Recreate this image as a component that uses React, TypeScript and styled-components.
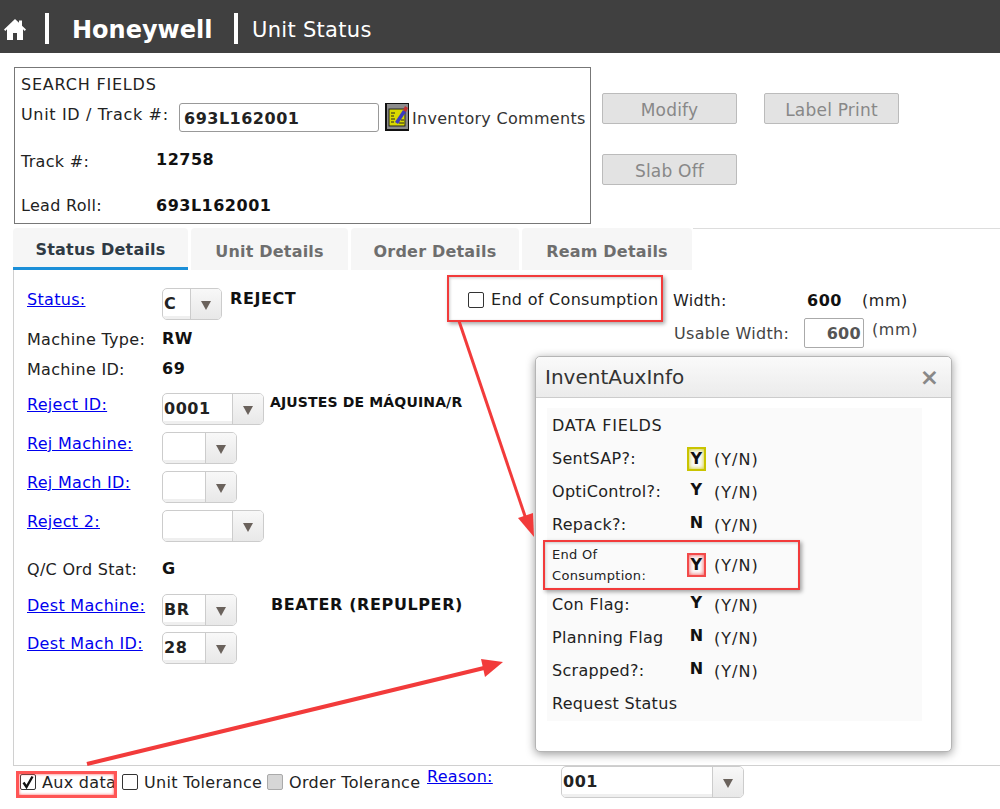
import React from 'react'
import styled, { createGlobalStyle } from 'styled-components'

const GlobalStyle = createGlobalStyle`
  html, body {
    margin: 0;
    height: 809px;
    overflow: hidden;
    background: #fff;
    font-family: 'DejaVu Sans', Verdana, sans-serif;
    font-size: 16px;
    letter-spacing: 0.3px;
    color: #222;
  }
  * { box-sizing: border-box; }
`

const Page = styled.div`
  position: relative;
  width: 1000px;
  height: 809px;
  overflow: hidden;
`

const Header = styled.header`
  display: flex;
  align-items: center;
  height: 53px;
  background: #404040;
  color: #fff;
  padding: 3px 0 0 4px;
`

const HomeLink = styled.a`
  display: flex;
  width: 41px;
  margin-top: 3px;
`

const Divider = styled.span`
  width: 4px;
  height: 31px;
  background: #fff;
`

const Brand = styled.span`
  width: 185px;
  padding: 3px 0 0 23px;
  font-size: 24px;
  letter-spacing: 0;
  font-weight: 700;
  white-space: nowrap;
`

const PageTitle = styled.span`
  padding: 3px 0 0 14px;
  font-size: 21px;
  white-space: nowrap;
`

const TopArea = styled.section`
  display: flex;
  height: 175px;
  padding: 14px 0 0 14px;
`

const SearchBox = styled.div`
  width: 577px;
  height: 157px;
  border: 1px solid #777;
  padding: 7px 0 0 6px;
`

const SearchTitle = styled.div`
  height: 23px;
  line-height: 20px;
  letter-spacing: 0.8px;
`

const SearchRow = styled.div<{ $h: number }>`
  display: flex;
  align-items: center;
  height: ${(p) => p.$h}px;
  white-space: nowrap;
`

const SearchLabel = styled.span<{ $shift?: number; $wide?: boolean }>`
  flex: none;
  width: 135px;
  margin-top: ${(p) => p.$shift ?? 0}px;
  letter-spacing: ${(p) => (p.$wide ? 0.65 : 0.3)}px;
`

const UnitInput = styled.div`
  width: 200px;
  height: 29px;
  margin: 0 6px 0 23px;
  padding-left: 4px;
  border: 1px solid #999;
  border-radius: 3px;
  font-weight: 700;
  letter-spacing: 0.5px;
  line-height: 29px;
`

const CommentLabel = styled.span`
  padding: 3px 0 0 3px;
  color: #333;
`

const Strong = styled.span<{ $drop?: boolean }>`
  font-weight: 700;
  letter-spacing: 0.5px;
  color: #111;
  padding-top: ${(p) => (p.$drop ? 2 : 0)}px;
`

const Actions = styled.div`
  display: grid;
  grid-template-columns: 135px 135px;
  grid-auto-rows: 31px;
  column-gap: 27px;
  row-gap: 30px;
  margin: 26px 0 0 11px;
`

const ActionButton = styled.button`
  padding-top: 3px;
  border: 1px solid #bbb;
  border-radius: 2px;
  background: #e3e3e3;
  color: #888;
  font: inherit;
  font-size: 17px;
  letter-spacing: 0.2px;
`

const Tabs = styled.nav`
  display: flex;
  gap: 3px;
  height: 42px;
  margin-left: 13px;
  position: relative;
  &::after {
    content: '';
    position: absolute;
    left: 680px;
    right: 0;
    top: 0;
    border-top: 1px solid #ddd;
  }
`

const Tab = styled.div<{ $w: number; $active?: boolean }>`
  width: ${(p) => p.$w}px;
  padding-top: ${(p) => (p.$active ? 12 : 14)}px;
  text-align: center;
  font-weight: 700;
  font-size: 16px;
  letter-spacing: 0.2px;
  border-radius: 4px 4px 0 0;
  background: #f6f6f6;
  color: ${(p) => (p.$active ? '#2f3a44' : '#6e6e6e')};
  border-bottom: ${(p) => (p.$active ? '3px solid #1b8fd8' : 'none')};
`

const Panel = styled.section`
  display: flex;
  height: 496px;
  margin-left: 13px;
  border-left: 1px solid #d0d0d0;
  border-bottom: 1px solid #d0d0d0;
`

const FormColumn = styled.div`
  width: 434px;
  padding: 18px 0 0 13px;
`

const FormRow = styled.div<{ $h: number }>`
  display: flex;
  height: ${(p) => p.$h}px;
  white-space: nowrap;
`

const FieldLabel = styled.span`
  flex: none;
  width: 135px;
  padding-top: 3px;
  color: #222;
`

const FieldLink = styled.a`
  flex: none;
  width: 135px;
  height: 24px;
  padding-top: 2px;
  color: #0000ee;
  text-decoration: underline;
`

const Select = styled.div<{ $w: number }>`
  display: flex;
  flex: none;
  width: ${(p) => p.$w}px;
  height: 32px;
  border: 1px solid #ccc;
  border-radius: 5px;
  overflow: hidden;
  font-weight: 700;
`

const SelectValue = styled.div`
  flex: 1;
  padding-left: 1px;
  line-height: 30px;
  letter-spacing: 0.5px;
  box-shadow: inset 0 -3px 0 #efefef;
`

const SelectArrow = styled.div`
  display: flex;
  align-items: center;
  justify-content: center;
  width: 31px;
  border-left: 1px solid #ccc;
  background: linear-gradient(#f8f8f8, #e8e8e8);
  &::after {
    content: '';
    margin-top: 3px;
    border-left: 5px solid transparent;
    border-right: 5px solid transparent;
    border-top: 9px solid #6a625c;
  }
`

const SelectNote = styled.span<{ $small?: boolean; $indent?: number }>`
  padding: 1px 0 0 ${(p) => p.$indent ?? 8}px;
  font-weight: 700;
  font-size: ${(p) => (p.$small ? 14 : 16)}px;
  letter-spacing: ${(p) => (p.$small ? 0.15 : 0.6)}px;
  color: #111;
`

const SideColumn = styled.div`
  padding: 19px 0 0 20px;
`

const SideTop = styled.div`
  display: flex;
  align-items: center;
  height: 22px;
  white-space: nowrap;
`

const CheckBox = styled.span<{ $disabled?: boolean }>`
  display: inline-flex;
  align-items: center;
  justify-content: center;
  flex: none;
  width: 16px;
  height: 16px;
  border: 1px solid ${(p) => (p.$disabled ? '#aaa' : '#333')};
  border-radius: 2px;
  background: ${(p) => (p.$disabled ? '#d6d6d6' : '#fff')};
`

const ConsumptionLabel = styled.span`
  width: 189px;
  padding: 0 0 2px 7px;
`

const WidthLabel = styled.span`
  width: 134px;
`

const WidthUnit = styled.span`
  padding-left: 20px;
  letter-spacing: 0.6px;
`

const SideBottom = styled.div`
  display: flex;
  margin: 7px 0 0 206px;
  white-space: nowrap;
  color: #444;
  height: 30px;
`

const UsableLabel = styled.span`
  width: 130px;
  padding-top: 6px;
`

const UsableBox = styled.div`
  width: 60px;
  height: 30px;
  margin-right: 8px;
  padding-right: 2px;
  border: 1px solid #aaa;
  border-radius: 2px;
  text-align: right;
  font-weight: 700;
  line-height: 30px;
  color: #555;
`

const UsableUnit = styled.span`
  padding-top: 2px;
  letter-spacing: 0.6px;
`

const Footer = styled.footer`
  display: flex;
  align-items: flex-start;
  padding-left: 20px;
  white-space: nowrap;
`

const FooterCheck = styled.label<{ $w: number }>`
  display: flex;
  align-items: center;
  gap: 6px;
  width: ${(p) => p.$w}px;
  height: 32px;
`

const ReasonLink = styled.a`
  width: 134px;
  padding-top: 1px;
  color: #0000ee;
  text-decoration: underline;
`

const Dialog = styled.aside`
  position: absolute;
  left: 535px;
  top: 356px;
  width: 417px;
  height: 396px;
  background: #fff;
  border: 1px solid #b5b5b5;
  border-radius: 5px;
  box-shadow: 0 2px 10px rgba(0, 0, 0, 0.4);
`

const DialogTitle = styled.div`
  display: flex;
  align-items: center;
  justify-content: space-between;
  height: 41px;
  padding: 0 12px 0 9px;
  border-bottom: 1px solid #ccc;
  border-radius: 5px 5px 0 0;
  background: linear-gradient(#fafafa, #ebebeb);
  font-size: 20px;
  letter-spacing: 0;
  color: #333;
`

const CloseMark = styled.span`
  font-size: 23px;
  font-weight: 700;
  color: #888;
  line-height: 1;
`

const DialogBody = styled.div`
  width: 375px;
  height: 313px;
  margin: 10px 0 0 11px;
  padding: 6px 0 0 5px;
  background: #fafafa;
`

const AuxHeading = styled.div`
  height: 28px;
  padding-top: 1px;
  line-height: 22px;
  letter-spacing: 0.8px;
`

const AuxRow = styled.div<{ $h: number }>`
  display: flex;
  align-items: center;
  height: ${(p) => p.$h}px;
  white-space: nowrap;
`

const AuxLabel = styled.span<{ $small?: boolean }>`
  flex: none;
  width: 135px;
  font-size: ${(p) => (p.$small ? 13 : 16)}px;
  line-height: 21px;
  white-space: ${(p) => (p.$small ? 'normal' : 'nowrap')};
`

const AuxValue = styled.span<{ $glow?: 'yellow' | 'red' }>`
  display: inline-block;
  width: 19px;
  height: 24px;
  margin-right: 8px;
  font-weight: 700;
  line-height: 20px;
  text-align: center;
  color: #111;
  ${(p) =>
    p.$glow === 'yellow' &&
    'border: 2px solid #c9c400; box-shadow: inset 0 0 4px #c9c400;'}
  ${(p) =>
    p.$glow === 'red' &&
    'border: 2px solid #f24a4a; box-shadow: inset 0 0 4px #f24a4a;'}
`

const AuxHint = styled.span`
  padding-top: 2px;
  letter-spacing: 1px;
`

const RedBox = styled.div<{ $l: number; $t: number; $w: number; $h: number }>`
  position: absolute;
  left: ${(p) => p.$l}px;
  top: ${(p) => p.$t}px;
  width: ${(p) => p.$w}px;
  height: ${(p) => p.$h}px;
  border: 2px solid #f23b3b;
  box-shadow: 2px 2px 4px rgba(0, 0, 0, 0.35), inset 1px 1px 3px rgba(0, 0, 0, 0.2);
`

const AuxMark = styled.div`
  position: absolute;
  left: 16px;
  top: 771px;
  width: 101px;
  height: 27px;
  border: 3px solid #f55;
  box-shadow: inset 0 0 3px #f55;
`

const ArrowLayer = styled.svg`
  position: absolute;
  left: 0;
  top: 0;
  pointer-events: none;
`

const HomeIcon = () => (
  <svg width="22" height="21" viewBox="0 0 22 21" fill="#fff">
    <path d="M11 0 0 10.5l1.3 1.4L3 10.3V21h6v-7h4v7h6V10.3l1.7 1.6 1.3-1.4-4-3.8V1.5h-3v2.3z" />
  </svg>
)

const CommentIcon = () => (
  <svg width="24" height="28" viewBox="0 0 24 28" style={{ flex: 'none' }}>
    <rect width="24" height="28" fill="#111" />
    <rect x="2" y="1" width="21" height="25" fill="#8c8c8c" />
    <rect x="4" y="6" width="16" height="17" fill="#d8d800" stroke="#222" />
    <path d="M6 10h4M6 13h3M6 16h4M6 19h3M14 20h5M16 17h3" stroke="#222" />
    <path d="M10 19 18 7l3 2-8 12z" fill="#3a3ac0" />
    <path d="M18 7l2-4 3 2-2 4z" fill="#c03030" />
  </svg>
)

const CheckMark = () => (
  <svg width="14" height="14" viewBox="0 0 14 14">
    <path d="M2.5 7.5 5.5 12 11.5 1.5" fill="none" stroke="#111" strokeWidth="2.4" />
  </svg>
)

const fields = [
  { label: 'SentSAP?:', value: 'Y', h: 33, glow: 'yellow' as const },
  { label: 'OptiControl?:', value: 'Y', h: 33 },
  { label: 'Repack?:', value: 'N', h: 33 },
  { label: 'End Of Consumption:', value: 'Y', h: 47, glow: 'red' as const, small: true },
  { label: 'Con Flag:', value: 'Y', h: 33 },
  { label: 'Planning Flag', value: 'N', h: 33 },
  { label: 'Scrapped?:', value: 'N', h: 33 },
]

const App = () => (
  <Page>
    <GlobalStyle />
    <Header>
      <HomeLink>
        <HomeIcon />
      </HomeLink>
      <Divider />
      <Brand>Honeywell</Brand>
      <Divider />
      <PageTitle>Unit Status</PageTitle>
    </Header>

    <TopArea>
      <SearchBox>
        <SearchTitle>SEARCH FIELDS</SearchTitle>
        <SearchRow $h={38}>
          <SearchLabel $shift={-6} $wide>Unit ID / Track #:</SearchLabel>
          <UnitInput>693L162001</UnitInput>
          <CommentIcon />
          <CommentLabel>Inventory Comments</CommentLabel>
        </SearchRow>
        <SearchRow $h={47}>
          <SearchLabel $shift={4}>Track #:</SearchLabel>
          <Strong>12758</Strong>
        </SearchRow>
        <SearchRow $h={45}>
          <SearchLabel>Lead Roll:</SearchLabel>
          <Strong>693L162001</Strong>
        </SearchRow>
      </SearchBox>
      <Actions>
        <ActionButton>Modify</ActionButton>
        <ActionButton>Label Print</ActionButton>
        <ActionButton>Slab Off</ActionButton>
      </Actions>
    </TopArea>

    <Tabs>
      <Tab $w={175} $active>Status Details</Tab>
      <Tab $w={157}>Unit Details</Tab>
      <Tab $w={168}>Order Details</Tab>
      <Tab $w={170}>Ream Details</Tab>
    </Tabs>

    <Panel>
      <FormColumn>
        <FormRow $h={39}>
          <FieldLink>Status:</FieldLink>
          <Select $w={60}>
            <SelectValue>C</SelectValue>
            <SelectArrow />
          </Select>
          <SelectNote>REJECT</SelectNote>
        </FormRow>
        <FormRow $h={30}>
          <FieldLabel>Machine Type:</FieldLabel>
          <Strong $drop>RW</Strong>
        </FormRow>
        <FormRow $h={36}>
          <FieldLabel>Machine ID:</FieldLabel>
          <Strong $drop>69</Strong>
        </FormRow>
        <FormRow $h={39}>
          <FieldLink>Reject ID:</FieldLink>
          <Select $w={102}>
            <SelectValue>0001</SelectValue>
            <SelectArrow />
          </Select>
          <SelectNote $small $indent={6}>AJUSTES DE MÁQUINA/R</SelectNote>
        </FormRow>
        <FormRow $h={39}>
          <FieldLink>Rej Machine:</FieldLink>
          <Select $w={75}>
            <SelectValue />
            <SelectArrow />
          </Select>
        </FormRow>
        <FormRow $h={39}>
          <FieldLink>Rej Mach ID:</FieldLink>
          <Select $w={75}>
            <SelectValue />
            <SelectArrow />
          </Select>
        </FormRow>
        <FormRow $h={47}>
          <FieldLink>Reject 2:</FieldLink>
          <Select $w={102}>
            <SelectValue />
            <SelectArrow />
          </Select>
        </FormRow>
        <FormRow $h={37}>
          <FieldLabel>Q/C Ord Stat:</FieldLabel>
          <Strong $drop>G</Strong>
        </FormRow>
        <FormRow $h={38}>
          <FieldLink>Dest Machine:</FieldLink>
          <Select $w={75}>
            <SelectValue>BR</SelectValue>
            <SelectArrow />
          </Select>
          <SelectNote $indent={34}>BEATER (REPULPER)</SelectNote>
        </FormRow>
        <FormRow $h={38}>
          <FieldLink>Dest Mach ID:</FieldLink>
          <Select $w={75}>
            <SelectValue>28</SelectValue>
            <SelectArrow />
          </Select>
        </FormRow>
      </FormColumn>
      <SideColumn>
        <SideTop>
          <CheckBox />
          <ConsumptionLabel>End of Consumption</ConsumptionLabel>
          <WidthLabel>Width:</WidthLabel>
          <Strong>600</Strong>
          <WidthUnit>(mm)</WidthUnit>
        </SideTop>
        <SideBottom>
          <UsableLabel>Usable Width:</UsableLabel>
          <UsableBox>600</UsableBox>
          <UsableUnit>(mm)</UsableUnit>
        </SideBottom>
      </SideColumn>
    </Panel>

    <Footer>
      <FooterCheck $w={102}>
        <CheckBox>
          <CheckMark />
        </CheckBox>
        Aux data
      </FooterCheck>
      <FooterCheck $w={145}>
        <CheckBox />
        Unit Tolerance
      </FooterCheck>
      <FooterCheck $w={160}>
        <CheckBox $disabled />
        Order Tolerance
      </FooterCheck>
      <ReasonLink>Reason:</ReasonLink>
      <Select $w={183}>
        <SelectValue>001</SelectValue>
        <SelectArrow />
      </Select>
    </Footer>

    <Dialog>
      <DialogTitle>
        InventAuxInfo
        <CloseMark>×</CloseMark>
      </DialogTitle>
      <DialogBody>
        <AuxHeading>DATA FIELDS</AuxHeading>
        {fields.map((f) => (
          <AuxRow key={f.label} $h={f.h}>
            <AuxLabel $small={f.small}>{f.label}</AuxLabel>
            <AuxValue $glow={f.glow}>{f.value}</AuxValue>
            <AuxHint>(Y/N)</AuxHint>
          </AuxRow>
        ))}
        <AuxRow $h={33}>Request Status</AuxRow>
      </DialogBody>
    </Dialog>

    <RedBox $l={447} $t={275} $w={216} $h={47} />
    <RedBox $l={543} $t={540} $w={257} $h={50} />
    <AuxMark />

    <ArrowLayer width="1000" height="809" viewBox="0 0 1000 809">
      <path d="M459 321 527 522" stroke="#f23b3b" strokeWidth="3" fill="none" />
      <path d="M534 537 518 518 533 513z" fill="#f23b3b" />
      <path d="M87 764 484 668" stroke="#f23b3b" strokeWidth="4" fill="none" />
      <path d="M503 662 481 659 485 677z" fill="#f23b3b" />
    </ArrowLayer>
  </Page>
)

export default App
